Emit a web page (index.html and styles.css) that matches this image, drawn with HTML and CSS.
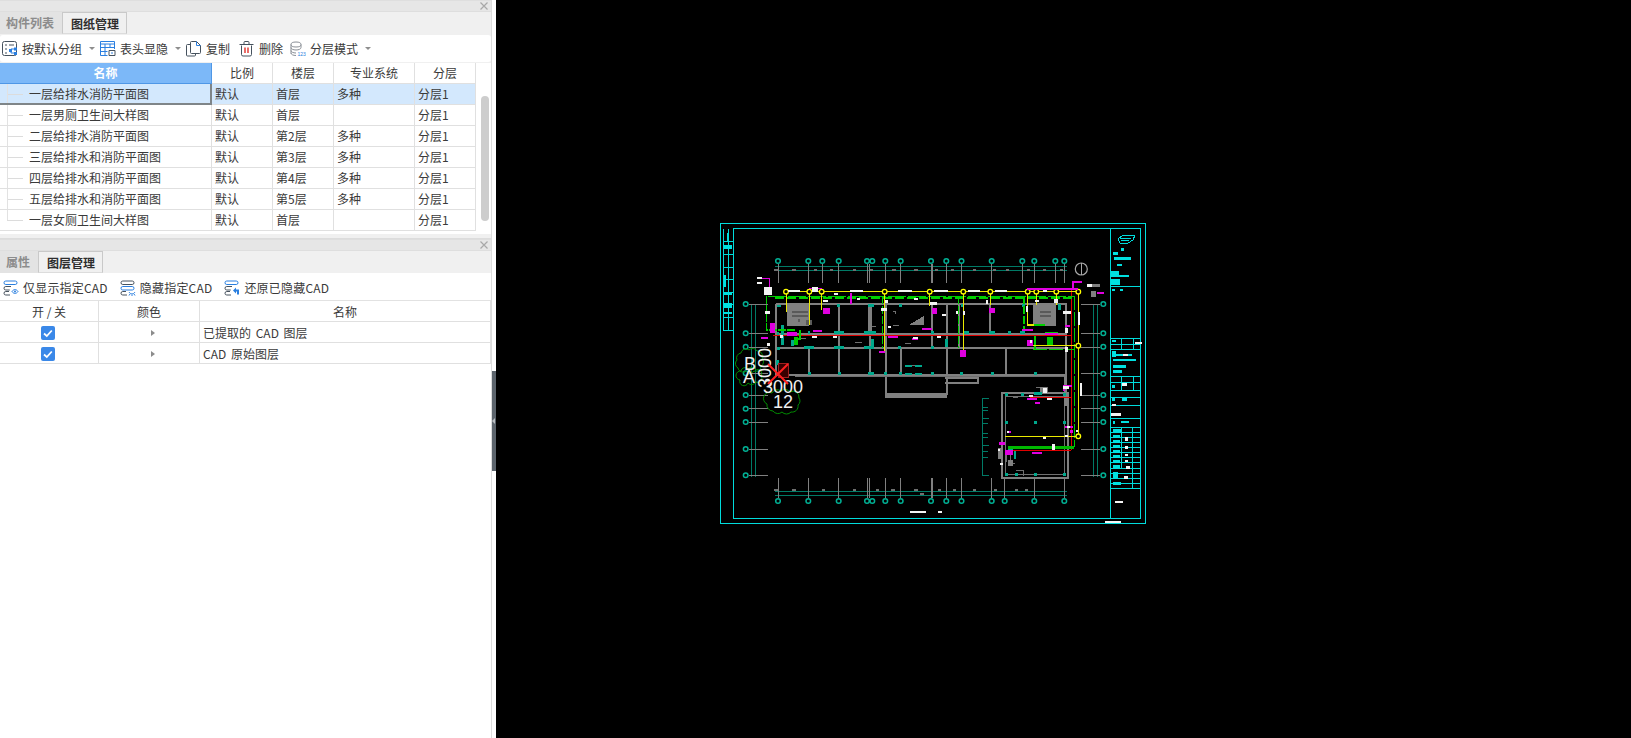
FILE: index.html
```html
<!DOCTYPE html>
<html lang="zh">
<head>
<meta charset="utf-8">
<title>图纸管理</title>
<link rel="stylesheet" href="styles.css">
</head>
<body>
<div class="app">
  <aside class="side">
    <section class="panel panel-top">
      <div class="titlebar"><svg class="close" viewBox="0 0 8 8"><path d="M0.5 0.5l7 7M7.5 0.5l-7 7"/></svg></div>
      <div class="tabs">
        <div class="tab tab-a">构件列表</div>
        <div class="tab tab-on tab-b">图纸管理</div>
      </div>
      <div class="toolbar toolbar-a">
        <div class="tool">
          <svg class="ico" viewBox="0 0 16 16"><rect x="0.5" y="0.5" width="14" height="14" rx="2" fill="none" stroke="#46525e"/><path d="M3 4h2M7 4h5M3 8h2M3 12h2" stroke="#46525e"/><path d="M9 8h3M9 12h3M9 8v4" stroke="#2a7fe0"/><rect x="7" y="8" width="3" height="3" fill="#2a7fe0"/><rect x="12" y="6.5" width="3" height="3" fill="#2a7fe0"/><rect x="12" y="11" width="3" height="3" fill="#2a7fe0"/></svg>
          <span>按默认分组</span><i class="caret"></i>
        </div>
        <div class="tool">
          <svg class="ico" viewBox="0 0 16 16"><path d="M0.5 0.5h14v2.5h-14zM0.5 3v11.5h7M14.5 3v5M0.5 6.5h14M0.5 10.5h7M5 3v11.5M10 3v3.5" fill="none" stroke="#2a7fe0"/><path d="M9 9.5h6v5h-6z" fill="#fff" stroke="#46525e"/><path d="M11 12h2" stroke="#2a7fe0"/></svg>
          <span>表头显隐</span><i class="caret"></i>
        </div>
        <div class="tool">
          <svg class="ico" viewBox="0 0 16 16"><path d="M4.5 3.5h-3a1 1 0 0 0-1 1v9.5a1 1 0 0 0 1 1h7a1 1 0 0 0 1-1v-1" fill="none" stroke="#46525e"/><path d="M4.5 1.5a1 1 0 0 1 1-1h5l4 4v7a1 1 0 0 1-1 1h-8a1 1 0 0 1-1-1z" fill="#fff" stroke="#46525e"/><path d="M10.5 0.5v4h4" fill="none" stroke="#2a7fe0"/></svg>
          <span>复制</span>
        </div>
        <div class="tool tool-gap">
          <svg class="ico" viewBox="0 0 16 16"><path d="M2.5 4.5v9a1.5 1.5 0 0 0 1.5 1.5h7a1.5 1.5 0 0 0 1.5-1.5v-9M0.5 3.5h14M5 3.5v-2a1 1 0 0 1 1-1h3a1 1 0 0 1 1 1v2" fill="none" stroke="#46525e"/><path d="M6 6.5v5.5M9 6.5v5.5" stroke="#e0302a" stroke-width="1.4"/></svg>
          <span>删除</span>
        </div>
        <div class="tool tool-gap2">
          <svg class="ico" viewBox="0 0 16 16"><ellipse cx="6" cy="3.5" rx="5" ry="2.5" fill="none" stroke="#8a8f96"/><path d="M1 6.5c0 1.5 2.2 2.5 5 2.5s5-1 5-2.5M1 9.5c0 1.5 2.2 2.5 5 2.5M1 12c0 1.5 2.2 2.5 5 2.5M1 3.5v9M11 3.5v3" fill="none" stroke="#8a8f96"/><text class="mini" x="7.5" y="15">123</text></svg>
          <span>分层模式</span><i class="caret"></i>
        </div>
      </div>
      <div class="body-row">
        <table class="grid grid-a">
          <colgroup><col class="c1"><col class="c2"><col class="c2"><col class="c3"><col class="c2"></colgroup>
          <thead>
            <tr><th class="th-name">名称</th><th>比例</th><th>楼层</th><th>专业系统</th><th>分层</th></tr>
          </thead>
          <tbody>
            <tr class="sel"><td class="nm">一层给排水消防平面图</td><td>默认</td><td>首层</td><td>多种</td><td>分层1</td></tr>
            <tr><td class="nm">一层男厕卫生间大样图</td><td>默认</td><td>首层</td><td></td><td>分层1</td></tr>
            <tr><td class="nm">二层给排水消防平面图</td><td>默认</td><td>第2层</td><td>多种</td><td>分层1</td></tr>
            <tr><td class="nm">三层给排水和消防平面图</td><td>默认</td><td>第3层</td><td>多种</td><td>分层1</td></tr>
            <tr><td class="nm">四层给排水和消防平面图</td><td>默认</td><td>第4层</td><td>多种</td><td>分层1</td></tr>
            <tr><td class="nm">五层给排水和消防平面图</td><td>默认</td><td>第5层</td><td>多种</td><td>分层1</td></tr>
            <tr><td class="nm last">一层女厕卫生间大样图</td><td>默认</td><td>首层</td><td></td><td>分层1</td></tr>
          </tbody>
        </table>
        <div class="track"><div class="thumb"></div></div>
      </div>
    </section>

    <section class="panel panel-bottom">
      <div class="titlebar"><svg class="close" viewBox="0 0 8 8"><path d="M0.5 0.5l7 7M7.5 0.5l-7 7"/></svg></div>
      <div class="tabs">
        <div class="tab tab-c">属性</div>
        <div class="tab tab-on tab-b">图层管理</div>
      </div>
      <div class="toolbar toolbar-b">
        <div class="tool">
          <svg class="ico" viewBox="0 0 16 16"><rect x="1" y="1" width="13" height="3.5" rx="1.75" fill="none" stroke="#2a7fe0"/><path d="M8 6.5h-5.250a1.750 1.750 0 0 0 0 3.500h4M6 11.500h-3.250a1.750 1.750 0 0 0 0 3.500h4.250" fill="none" stroke="#46525e"/><path d="M9 11.500c1.500-2.500 4.500-2.500 6 0c-1.500 2.500-4.500 2.500-6 0z" fill="none" stroke="#2a7fe0"/><circle cx="12" cy="11.500" r="1" fill="#2a7fe0"/></svg>
          <span>仅显示指定CAD</span>
        </div>
        <div class="tool tool-b2">
          <svg class="ico" viewBox="0 0 16 16"><rect x="1" y="1" width="13" height="3.500" rx="1.750" fill="none" stroke="#46525e"/><rect x="1" y="6.500" width="13" height="3.500" rx="1.750" fill="none" stroke="#2a7fe0"/><path d="M6 11.500h-3.250a1.750 1.750 0 0 0 0 3.500h4.250" fill="none" stroke="#46525e"/><path d="M9 12c1.500 2.500 4.500 2.500 6 0M10 14l-1 1.500M12 14.500v1.500M14 14l1 1.500" fill="none" stroke="#2a7fe0"/></svg>
          <span>隐藏指定CAD</span>
        </div>
        <div class="tool tool-b2">
          <svg class="ico" viewBox="0 0 16 16"><rect x="1" y="1" width="13" height="3.500" rx="1.750" fill="none" stroke="#2a7fe0"/><path d="M8 6.500h-5.250a1.750 1.750 0 0 0 0 3.500h4M6 11.500h-3.250a1.750 1.750 0 0 0 0 3.500h4.250" fill="none" stroke="#46525e"/><path d="M9 10.500l3-3v2h3v5h-2v-3h-1v2z" fill="#2a7fe0"/></svg>
          <span>还原已隐藏CAD</span>
        </div>
      </div>
      <table class="grid grid-b">
        <colgroup><col class="d1"><col class="d2"><col></colgroup>
        <thead><tr><th>开 / 关</th><th>颜色</th><th>名称</th></tr></thead>
        <tbody>
          <tr><td class="ctr"><span class="check"><svg viewBox="0 0 14 14"><path d="M3 7.500l2.800 2.500 5-5.500"/></svg></span></td><td class="ctr"><i class="expand"></i></td><td class="lname">已提取的 CAD 图层</td></tr>
          <tr><td class="ctr"><span class="check"><svg viewBox="0 0 14 14"><path d="M3 7.500l2.800 2.500 5-5.500"/></svg></span></td><td class="ctr"><i class="expand"></i></td><td class="lname">CAD 原始图层</td></tr>
        </tbody>
      </table>
    </section>
    <div class="splitter"><i></i></div>
  </aside>

  <main class="canvas">
    <svg class="dwg" viewBox="496 0 1135 738" preserveAspectRatio="xMinYMin meet">
      <!-- sheet frames -->
      <g class="frame">
        <path d="M720.500 223.500H1145.500V523.500H720.500z"/>
        <path d="M733.500 228.500H1140.500V518.500H733.500z"/>
        <path d="M1110.500 228.500V518.500"/>
        <path d="M723.500 228.500V330.500H733M728.500 228.500V330.500M724 241h9M724 254h9M724 267h9M724 279h9M724 292h9M724 304h9M724 317h9"/>
        <path d="M1110 286.500H1141M1110 338.500H1141M1110 344.500H1141M1110 349.500H1141M1110 376.500H1141M1110 382.500H1141M1110 390.500H1141M1110 397.500H1141M1110 405.500H1141M1110 418.500H1141M1110 427.500H1141M1110 432.500H1141M1110 437.500H1141M1110 442.500H1141M1110 447.500H1141M1110 452.500H1141M1110 457.500H1141M1110 462.500H1141M1110 468.500H1141M1110 473.500H1141M1110 478.500H1141M1110 483.500H1141M1110 488.500H1141"/>
        <path d="M1121.500 338.500V349M1133.500 338.500V349M1121.500 376.500V390M1133.500 376.500V390M1121.500 427.500V468M1132.500 427.500V488"/>
        <path d="M1118 239l5-4h12l-2 5-5 3h-8zM1120 238h11M1121 240h8"/>
      </g>
      <path class="cyanfill" d="M724 245h8v4h-8zM724 275h2v12h-2zM724 293h8v2h-8zM724 303h8v5h-8zM727 233h2v8h-2zM723 312h9v2h-9zM1121 248h3v3h-3zM1113 252h5v3h-5zM1114 257h17v3h-17zM1117 264h5v2h-5zM1111 271h8v6h-8zM1119 275h10v2h-10zM1111 279h9v6h-9zM1112 289h3v2h-3zM1120 289h3v2h-3zM1112 340h4v2h-4zM1112 351h4v6h-4zM1113 354h19v2h-19zM1113 359h23v2h-23zM1113 365h13v3h-13zM1113 370h9v3h-9zM1112 385h3v3h-3zM1112 398h3v3h-3zM1122 398h5v3h-5zM1113 421h2v3h-2zM1121 421h8v2h-8zM1113 429h8v3h-8zM1113 435h7v3h-7zM1113 440h7v3h-7zM1113 445h7v3h-7zM1113 450h7v3h-7zM1113 455h7v3h-7zM1113 460h7v3h-7zM1113 465h7v3h-7zM1113 472h5v6h-5zM1113 482h8v3h-8z"/>
      <path class="whitefill" d="M1123 354h5v2h-5zM1113 414h4v2h-4zM1111 413h10v3h-10zM1122 383h5v3h-5zM1135 342h7v2h-7zM1112 404h4v2h-4zM1124 383h3v3h-3zM1125 437h3v4h-3zM1125 446h3v3h-3zM1125 454h3v2h-3zM1125 460h3v2h-3zM1126 466h4v3h-4zM1124 476h4v3h-4zM1115 501h8v2h-8zM1105 521h16v2h-16zM910 511h16v2h-16zM938 511h4v2h-4z"/>

      <!-- axis lines -->
      <g class="axis">
        <path d="M775 266.500H1067M775 270.500H1067M775 491.500H1067M775 495.500H1067"/>
        <path d="M751.500 304V477M755.500 304V477M1093.500 304V477M1097.500 304V477"/>
        <path d="M982.500 398V475M982 398h7M982 407h6M982 410h6M982 418h7M982 423h6M982 433h6M982 437h6M982 445h7M982 451h6M982 457h6M982 475h7"/>
      </g>
      <g class="gridline">
        <path d="M778.500 264V283M808.500 264V283M822.500 264V283M838.500 264V283M867.500 264V283M869.500 264V283M885.500 264V283M900.500 264V283M931.500 264V283M932.500 264V283M946.500 264V283M961.500 264V283M991.500 264V283M1022.500 264V283M1034.500 264V283M1055.500 264V283M1064.500 264V283"/>
        <path d="M778.500 478V498M808.500 478V498M838.500 478V498M867.500 478V498M869.500 478V498M885.500 478V498M900.500 478V498M931.500 478V498M932.500 478V498M946.500 478V498M961.500 478V498M991.500 478V498M1004.500 478V498M1034.500 478V498M1064.500 478V498"/>
        <path d="M749 304.500H768M749 333.500H768M749 347.500H768M749 373.500H768M749 395.500H768M749 408.500H768M749 422.500H768M749 449.500H768M749 475.500H768"/>
        <path d="M1081 304.500H1100M1081 333.500H1100M1081 347.500H1100M1081 373.500H1100M1081 395.500H1100M1081 408.500H1100M1081 422.500H1100M1081 449.500H1100M1081 475.500H1100"/>
      </g>
      <g class="ticks">
        <path d="M774 270h4M792 270h4M814 270h3M830 270h3M853 270h3M870 270h3M892 270h4M914 270h4M935 270h3M951 270h3M973 270h3M993 270h3M1006 270h3M1027 270h3M1043 270h3M1060 270h3M774 490h4M792 490h4M822 490h3M853 490h3M876 490h3M891 490h4M914 490h4M920 494h4M938 490h3M953 490h3M973 490h3M994 490h3M1015 490h3M1025 490h3"/>
      </g>

      <g class="bubbles">
        <circle cx="778" cy="261" r="2.300"/><circle cx="808.300" cy="261" r="2.300"/><circle cx="822.300" cy="261" r="2.300"/><circle cx="838.700" cy="261" r="2.300"/><circle cx="867" cy="261" r="2.300"/><circle cx="872.300" cy="261" r="2.300"/><circle cx="885.300" cy="261" r="2.300"/><circle cx="900.700" cy="261" r="2.300"/><circle cx="931" cy="261" r="2.300"/><circle cx="946.300" cy="261" r="2.300"/><circle cx="961.500" cy="261" r="2.300"/><circle cx="991.700" cy="261" r="2.300"/><circle cx="1022.300" cy="261" r="2.300"/><circle cx="1034.300" cy="261" r="2.300"/><circle cx="1055.300" cy="261" r="2.300"/><circle cx="1064.300" cy="261" r="2.300"/>
        <circle cx="778" cy="501" r="2.300"/><circle cx="808.300" cy="501" r="2.300"/><circle cx="838.700" cy="501" r="2.300"/><circle cx="867" cy="501" r="2.300"/><circle cx="872.300" cy="501" r="2.300"/><circle cx="885.300" cy="501" r="2.300"/><circle cx="900.700" cy="501" r="2.300"/><circle cx="931" cy="501" r="2.300"/><circle cx="946.300" cy="501" r="2.300"/><circle cx="961.500" cy="501" r="2.300"/><circle cx="991.700" cy="501" r="2.300"/><circle cx="1004.700" cy="501" r="2.300"/><circle cx="1034.300" cy="501" r="2.300"/><circle cx="1064.300" cy="501" r="2.300"/>
        <circle cx="745.700" cy="304" r="2.300"/><circle cx="745.700" cy="333.300" r="2.300"/><circle cx="745.700" cy="346.700" r="2.300"/><circle cx="745.700" cy="373.300" r="2.300"/><circle cx="745.700" cy="395" r="2.300"/><circle cx="745.700" cy="408.700" r="2.300"/><circle cx="745.700" cy="422" r="2.300"/><circle cx="745.700" cy="449" r="2.300"/><circle cx="745.700" cy="475.300" r="2.300"/>
        <circle cx="1103.300" cy="304" r="2.300"/><circle cx="1103.300" cy="333.300" r="2.300"/><circle cx="1103.300" cy="346.700" r="2.300"/><circle cx="1103.300" cy="373.700" r="2.300"/><circle cx="1103.300" cy="395" r="2.300"/><circle cx="1103.300" cy="408.700" r="2.300"/><circle cx="1103.300" cy="422" r="2.300"/><circle cx="1103.300" cy="449" r="2.300"/><circle cx="1103.300" cy="475.300" r="2.300"/>
      </g>
      <g class="north"><circle cx="1081.300" cy="269" r="6"/><path d="M1081.500 263V275"/></g>

      <!-- walls -->
      <g class="wall">
        <path d="M775.500 303.500H1065.500V375.500M775.500 303.500V375M775 333.500H1066M775 347.500H1066M775 374.500H1066"/>
        <path d="M838.500 303V375M869.500 303V375M885.500 303V395M931.500 303V347M946.500 303V395M958.500 303V347M808.500 347V375M900.500 347V375M989.500 303V333M1005.500 347V375"/>
        <path d="M945 377.500H977.500V382.500H945M1002 392.500H1067.500V477.500H1002z"/>
      </g>
      <g class="wall-thin">
        <path d="M795 376.500H1065M1005 396.500H1064V474.500H1005zM1035.500 387.500H1047.500V392M912 365h6M920 335h6M1006 452v10M1010 454v9h5M1016 470h7v6M893 311h2v3M800 338h6M855 342h7M905 343h6M1013 397h5M870 326h6M893 325h6"/>
      </g>
      <path class="greyfill" d="M885 393h62v5h-62zM787 303h22v23h-22zM1033 303h23v23h-23zM909 325l15-9v9zM998 448h5v11h-5zM1008 460h5v6h-5zM1040 387h7v6h-7zM1100 284h-13v3h13zM1091 291h5v6h-5zM791 310h18v5h-18zM868 303h4v30h-4zM1064 376h3v30h-3z"/>
      <path class="darkfill" d="M792 311h16v2h-16zM792 315h16v2h-16zM1040 311h11v2h-11zM1040 315h11v2h-11zM800 319h-2v3h2zM806 320h6v5h-6z"/>

      <!-- door and column marks -->
      <path class="teal" d="M777 305h4v2h-4zM837 304h3v3h-3zM868 304h6v3h-6zM899 304h3v3h-3zM961 304h2v3h-2zM1022 304h3v3h-3zM1058 304h3v6h-3zM777 332h2v3h-2zM808 331h2v3h-2zM834 331h10v3h-10zM864 331h12v3h-12zM931 331h3v3h-3zM963 331h6v3h-6zM989 331h6v3h-6zM1008 331h3v3h-3zM1020 331h5v3h-5zM777 347h3v3h-3zM804 346h10v3h-10zM834 346h10v3h-10zM864 346h10v3h-10zM898 346h3v3h-3zM931 346h3v3h-3zM945 339h3v8h-3zM871 339h3v7h-3zM791 340h3v6h-3zM776 360h3v5h-3zM808 372h3v3h-3zM838 372h3v3h-3zM868 372h6v3h-6zM884 372h3v3h-3zM899 372h3v3h-3zM931 372h3v3h-3zM960 372h3v3h-3zM991 372h3v3h-3zM1034 372h3v3h-3zM1005 393h3v3h-3zM1021 393h3v3h-3zM1034 392h8v3h-8zM1063 393h3v3h-3zM1034 421h3v3h-3zM1005 421h3v3h-3zM1063 421h3v3h-3zM1005 473h3v3h-3zM1015 473h3v3h-3zM1034 473h3v3h-3zM1063 473h3v3h-3zM1008 448h5v3h-5zM1014 450h2v9h-2zM781 325h3v20h-3zM905 365h7v2h-7zM905 373h7v2h-7zM922 365h-7v2h7zM922 373h-7v2h7z"/>

      <!-- pipes -->
      <g class="red">
        <path d="M773 335.500H1072M1071.500 290V450M1030 397.500H1071M1007 450.500H1071"/>
      </g>
      <g class="green">
        <path d="M768 296.500H1074" stroke-dasharray="18 2"/>
        <path d="M775 298H1072" stroke-dasharray="9 3"/>
        <path d="M766.500 296V330H795" stroke-dasharray="8 1"/>
        <path d="M882.500 296V348M958.500 296V348M1024 296V330" stroke-dasharray="8 2"/>
        <path d="M1074.500 296V447M1033 349.500H1074" stroke-dasharray="14 2"/>
        <path d="M1008 447.500H1074" class="fat"/>
        <path d="M1035 336V349M1045 333h13M795 339h5v-9M1033 325h12"/>
      </g>
      <g class="yellow">
        <path d="M786 291.500H1078M1078.500 291V436M1005 436.500H1078M1033 345.500H1078M786.500 291V312M809.500 291V325M821.500 291V310M884.500 291V352M929.500 291V306M963.500 291V350M990.500 291V305M1027.500 291V325H1034M1036.500 291V305M1056.500 291V305"/>
      </g>
      <g class="nodes">
        <circle cx="786" cy="291.700" r="2.300"/><circle cx="809.300" cy="291.700" r="2.300"/><circle cx="821.700" cy="291.700" r="2.300"/><circle cx="884.700" cy="291.700" r="2.300"/><circle cx="929.700" cy="291.700" r="2.300"/><circle cx="963.300" cy="291.700" r="2.300"/><circle cx="990.300" cy="291.700" r="2.300"/><circle cx="1027.700" cy="291.700" r="2.300"/><circle cx="1036.300" cy="291.700" r="2.300"/><circle cx="1056.300" cy="291.700" r="2.300"/><circle cx="1078.300" cy="291.700" r="2.300"/><circle cx="1078.300" cy="345.700" r="2.300"/><circle cx="1078.300" cy="436.300" r="2.300"/>
      </g>
      <path class="magenta" d="M757 278h13v10h-1v-9h-12zM809 288h13v1h-13zM850 293h2v11h-2zM823 308h7v6h-7zM770 323h5v10h-5zM761 337h7v2h-7zM787 332h10v4h-10zM813 330h9v2h-9zM922 328h10v2h-10zM932 308h5v6h-5zM888 336h10v2h-10zM912 338h6v2h-6zM879 351h6v2h-6zM960 350h6v7h-6zM1027 288h51v2h-51zM1072 281h10v2h-10zM1072 281h2v9h-2zM1097 292h7v2h-7zM989 308h6v5h-6zM1027 340h6v6h-6zM1022 329h11v2h-11zM1045 333h13v2h-13zM1065 325h5v2h-5zM1063 385h9v2h-9zM1063 385h2v6h-2zM1027 398h10v2h-10zM1035 402h5v2h-5zM1065 426h8v2h-8zM1070 430h3v3h-3zM1007 431h4v2h-4zM999 442h6v3h-6zM1005 450h8v5h-8zM1032 452h10v2h-10z"/>
      <path class="whitefill" d="M788 290h12v2h-12zM764 287h8v8h-8zM757 277h5v2h-5zM757 282h5v2h-5zM765 311h5v3h-5zM812 287h6v5h-6zM834 293h4v2h-4zM850 290h13v2h-13zM857 298h3v2h-3zM898 290h14v2h-14zM934 290h14v2h-14zM914 298h4v2h-4zM881 308h6v3h-6zM885 300h3v3h-3zM930 302h7v3h-7zM942 314h4v2h-4zM956 311h2v3h-2zM812 336h5v2h-5zM833 336h4v2h-4zM913 337h5v2h-5zM937 336h4v2h-4zM888 326h3v2h-3zM823 300h5v2h-5zM968 290h12v2h-12zM995 290h12v2h-12zM986 300h2v4h-2zM956 311h2v3h-2zM963 311h2v4h-2zM1043 290h4v2h-4zM1026 306h2v6h-2zM1035 300h4v2h-4zM1054 299h4v4h-4zM1063 311h8v3h-8zM1078 312h2v13h-2zM1087 284h5v3h-5zM1065 328h3v5h-3zM1065 347h3v5h-3zM1030 340h2v3h-2zM1029 395h4v2h-4zM1047 398h5v2h-5zM1063 386h6v3h-6zM1080 383h2v13h-2zM1043 388h4v5h-4zM1076 430h2v2h-2zM1043 437h3v2h-3zM1052 444h3v6h-3zM998 449h2v2h-2zM1000 463h3v2h-3zM1065 435h3v2h-3zM1067 426h3v2h-3zM1007 431h2v2h-2zM780 335h3v3h-3zM767 343h3v3h-3z"/>
      <path class="greenblock" d="M1047 337h6v8h-6zM794 337h4v8h-4z"/>

      <!-- cursor tag -->
      <path class="darkred" d="M778.500 363.500h10v14h-10z"/>
      <path class="cloud" d="M741 353a5 5 0 0 1 8-3a5 5 0 0 1 8 1a5 5 0 0 1 5 7a5 5 0 0 1 -1 8a5 5 0 0 1 -7 5a5 5 0 0 1 -8 0a5 5 0 0 1 -8 -3a5 5 0 0 1 -1 -8a5 5 0 0 1 4 -7z"/>
      <path class="cloud" d="M741 371a4 4 0 0 1 7-2a5 5 0 0 1 8 1a4 4 0 0 1 5 6a4 4 0 0 1 -5 6a5 5 0 0 1 -8 1a4 4 0 0 1 -8 -3a4 4 0 0 1 1 -9z"/>
      <path class="cloud" d="M772 393a6 6 0 0 1 9-2a6 6 0 0 1 9 1a6 6 0 0 1 9 6a5 5 0 0 1 -1 7a6 6 0 0 1 -7 7a6 6 0 0 1 -9 0a6 6 0 0 1 -9 -1a6 6 0 0 1 -6 -7a6 6 0 0 1 5 -11z"/>
      <text class="lbl" x="750" y="369.500">B</text>
      <text class="lbl" x="749" y="383">A</text>
      <text class="lbl" transform="translate(771 368) rotate(-90)">3000</text>
      <text class="lbl" x="783" y="393">3000</text>
      <text class="lbl" x="783" y="408">12</text>
      <path class="xmark" d="M768 364L788 384M788 364L768 384"/>
    </svg>
  </main>
</div>
</body>
</html>
```

FILE: styles.css
```css
* { box-sizing: border-box; }
html, body { margin: 0; padding: 0; height: 100%; overflow: hidden; background: #000; }
body { font-family: "Noto Sans CJK SC", "Liberation Sans", sans-serif; font-size: 12px; color: #3a3a3a; }

.app { display: flex; height: 738px; }
.side { position: relative; flex: 0 0 496px; background: #fff; height: 100%; }
.canvas { flex: 1 1 auto; background: #000; min-width: 0; }
.dwg { display: block; width: 1135px; height: 738px; }

.panel { width: 492px; background: #fff; border-right: 1px solid #dcdcdc; }
.panel-top { height: 239px; background: #f0f0f0; border-bottom: 1px solid #dcdcdc; padding-bottom: 4px; display: flex; flex-direction: column; }
.panel-bottom { height: 499px; display: flex; flex-direction: column; background: #fff; }

.titlebar { height: 12px; flex: none; background: #e6e6e6; display: flex; justify-content: flex-end; align-items: center; padding-right: 3px; border-bottom: 1px solid #dedede; border-top: 1px solid #dedede; }
.close { width: 8px; height: 8px; }
.close path { stroke: #a8a8a8; stroke-width: 1.2; fill: none; }

.tabs { display: flex; height: 22px; flex: none; background: #f0f0f0; }
.tab { height: 22px; line-height: 21px; }
.tab-a { width: 62px; padding-left: 6px; background: #e3e3e3; color: #8c8c8c; font-weight: 700; }
.tab-c { width: 38px; padding-left: 6px; background: #e3e3e3; color: #8c8c8c; font-weight: 700; }
.tab-on { background: #f0f0f0; border: 1px solid #c9c9c9; border-bottom-color: #dcdcdc; color: #2e2e2e; font-weight: 700; }
.tab-b { width: 65px; padding-left: 8px; }

.toolbar { flex: none; display: flex; align-items: center; background: #fff; border-radius: 3px; }
.toolbar-a { height: 27px; margin-top: 1px; padding-left: 2px; gap: 5px; }
.toolbar-b { height: 27px; padding-left: 3px; padding-top: 2px; letter-spacing: 0.2px; }
.tool { display: flex; align-items: center; gap: 4px; white-space: nowrap; line-height: 16px; color: #3a3a3a; }
.tool-gap { margin-left: 4px; }
.tool-gap2 { margin-left: 2px; }
.tool-b2 { margin-left: 12px; }
.ico { width: 16px; height: 16px; flex: none; }
.mini { font: 5px "Liberation Sans", sans-serif; fill: #2a7fe0; }
.caret { width: 0; height: 0; margin-left: 3px; border-left: 3px solid transparent; border-right: 3px solid transparent; border-top: 3px solid #8e8e8e; }

.body-row { display: flex; flex: 1 1 auto; background: #fff; margin-top: 1px; min-height: 0; }
.track { flex: 1 1 auto; padding: 33px 3px 0 5px; }
.thumb { width: 8px; height: 125px; background: #cdcdcd; border-radius: 4px; }

.grid { border-collapse: separate; border-spacing: 0; table-layout: fixed; }
.grid-a { width: 476px; flex: none; align-self: flex-start; }
.grid-b { width: 491px; border-top: 1px solid #e2e2e2; }
.c1 { width: 212px; } .c2 { width: 61px; } .c3 { width: 81px; }
.d1 { width: 99px; } .d2 { width: 101px; }
.grid th, .grid td { height: 21px; padding: 0; border-right: 1px solid #e0e0e0; border-bottom: 1px solid #e0e0e0; font-weight: 400; white-space: nowrap; overflow: hidden; line-height: 18px; }
.grid th { text-align: center; color: #3a3a3a; }
.grid td { padding-left: 3px; background: #fff; }
.grid-b th { padding-top: 2px; }
.grid-b td.lname { padding: 2px 0 0 3px; word-spacing: 2px; }
.grid-b td.ctr { padding: 1px 0 0; }
.grid th.th-name { background: #7cb8f8; color: #fff; font-weight: 700; border-bottom-color: #4f97e6; border-right-color: #4f97e6; }
.grid td.nm { position: relative; padding-left: 29px; }
.nm::before { content: ""; position: absolute; left: 7px; width: 16px; top: 10px; border-top: 1px solid #dcdcdc; }
.nm::after { content: ""; position: absolute; left: 7px; top: 0; bottom: 0; border-left: 1px solid #e2e2e2; }
.nm.last::after { bottom: 10px; }
.sel td { background: #d3e8fd; }
.grid .sel td.nm { border-right: 2px solid #7f8588; border-bottom: 2px solid #7f8588; }

.check { display: block; width: 14px; height: 14px; margin-left: 41px; background: #3a88e8; border-radius: 2px; }
.check svg { display: block; width: 14px; height: 14px; }
.check path { fill: none; stroke: #fff; stroke-width: 1.800; }
.expand { display: block; width: 0; height: 0; margin-left: 52px; border-top: 3.500px solid transparent; border-bottom: 3.500px solid transparent; border-left: 4px solid #8c8c8c; }

.splitter { position: absolute; left: 492px; top: 371px; width: 4px; height: 100px; background: #5c646c; display: flex; align-items: center; }
.splitter i { width: 0; height: 0; border-top: 3px solid transparent; border-bottom: 3px solid transparent; border-right: 3px solid #b8bcc0; }

/* drawing */
.dwg * { shape-rendering: crispEdges; }
.frame path { fill: none; stroke: #00dcdc; stroke-width: 1; }
.cyanfill { fill: #00e0e0; }
.whitefill { fill: #f4f4f4; }
.axis path { fill: none; stroke: #007a66; stroke-width: 1; }
.gridline path { fill: none; stroke: #808080; stroke-width: 1; }
.ticks path { fill: none; stroke: #707070; stroke-width: 2; }
.bubbles circle { fill: none; stroke: #00b094; stroke-width: 1.500; shape-rendering: auto; }
.north circle, .north path { fill: none; stroke: #a8a8a8; stroke-width: 1.200; }
.north circle { shape-rendering: auto; }
.wall path { fill: none; stroke: #808080; stroke-width: 2; }
.wall-thin path { fill: none; stroke: #707070; stroke-width: 1; }
.greyfill { fill: #808080; }
.darkfill { fill: #5a5a5a; }
.teal { fill: #00a88c; }
.red path { fill: none; stroke: #e00000; stroke-width: 1.500; }
.green path { fill: none; stroke: #00d000; stroke-width: 1.200; }
.green path.fat { stroke-width: 3; stroke: #00b800; }
.yellow path { fill: none; stroke: #eaea00; stroke-width: 1.400; }
.nodes circle { fill: #000; stroke: #ffff00; stroke-width: 1.300; shape-rendering: auto; }
.magenta { fill: #e000e0; }
.greenblock { fill: #00c800; }
.darkred { fill: #3a0000; stroke: #a02020; stroke-width: 1; }
.cloud { fill: none; stroke: #008c00; stroke-width: 1; shape-rendering: auto; }
.lbl { font-family: "Liberation Sans", sans-serif; font-size: 18px; fill: #f0f0f0; text-anchor: middle; shape-rendering: auto; }
.xmark { fill: none; stroke: #ff2020; stroke-width: 2; shape-rendering: auto; }
```
